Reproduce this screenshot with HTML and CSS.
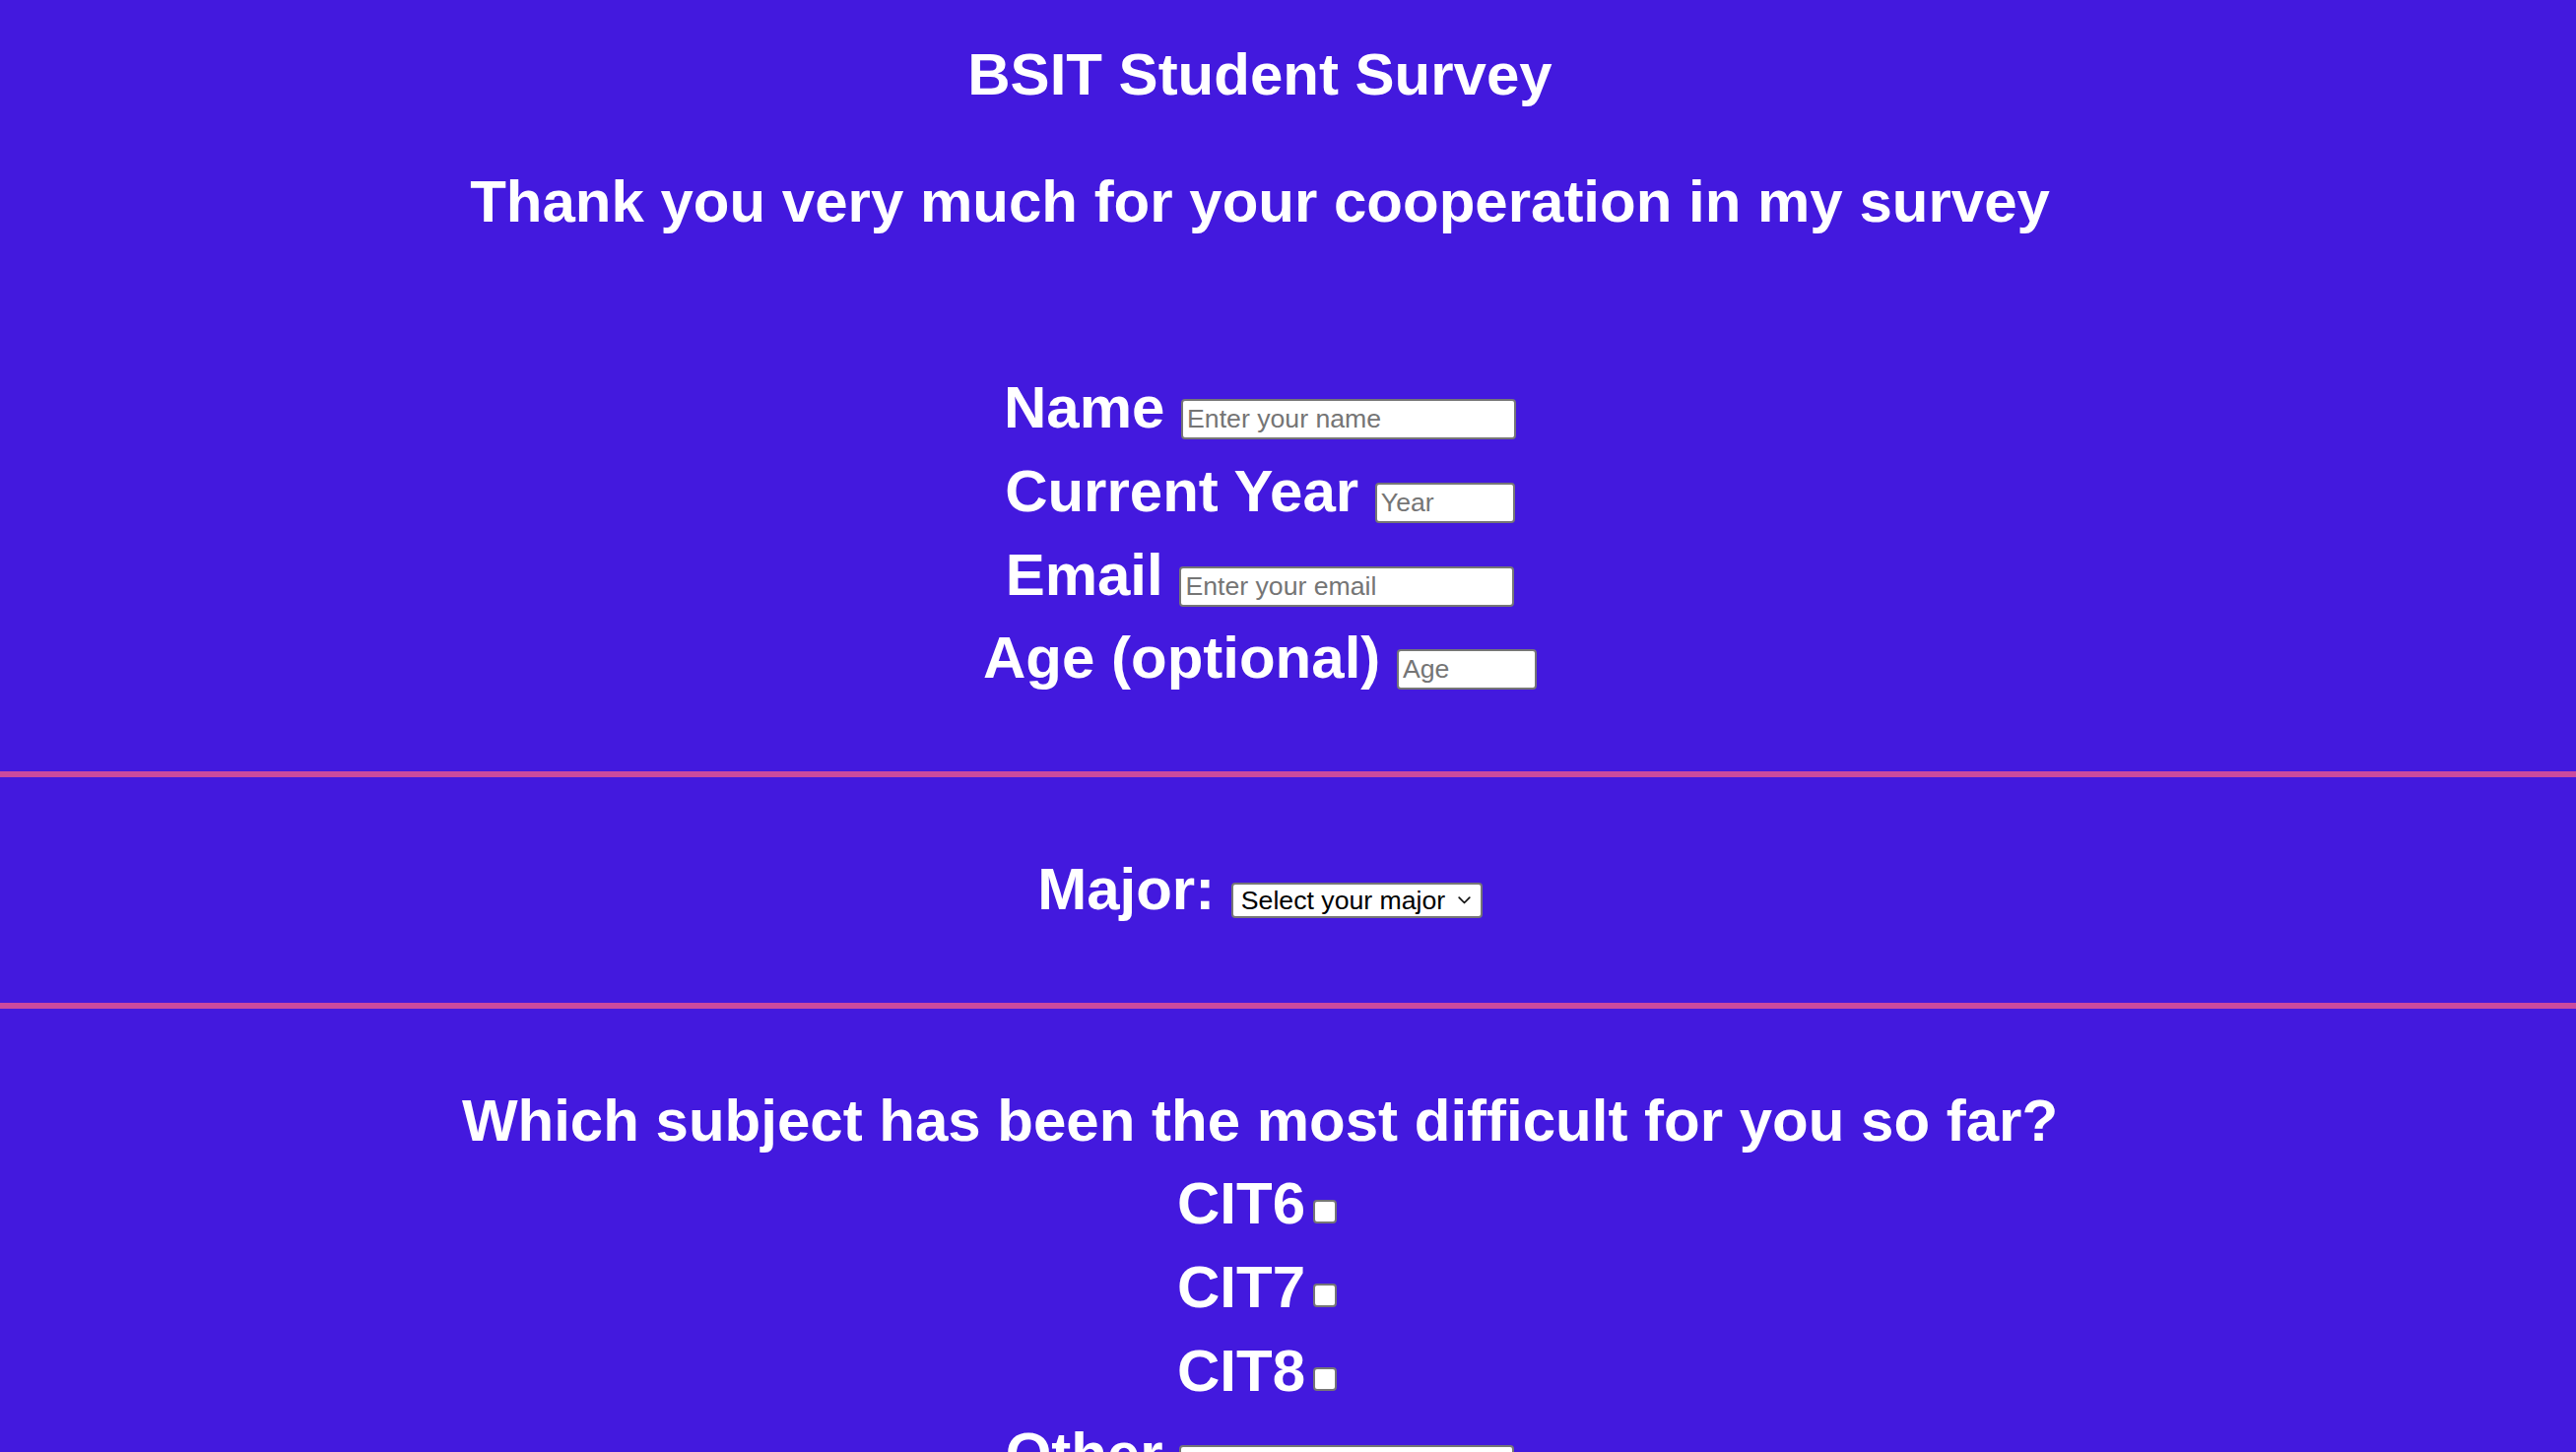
FILE: index.html
```html
<!DOCTYPE html>
<html lang="en">
<head>
<meta charset="utf-8">
<title>BSIT Student Survey</title>
<link rel="stylesheet" href="styles.css">
</head>
<body>
<main class="page">
  <header class="head">
    <h1 class="title">BSIT Student Survey</h1>
    <h2 class="thanks">Thank you very much for your cooperation in my survey</h2>
  </header>

  <section class="info">
    <div class="row"><label class="lbl" for="name">Name</label> <input class="field wide" id="name" type="text" placeholder="Enter your name"></div>
    <div class="row"><label class="lbl" for="year">Current Year</label> <input class="field narrow" id="year" type="text" placeholder="Year"></div>
    <div class="row"><label class="lbl" for="email">Email</label> <input class="field wide" id="email" type="email" placeholder="Enter your email"></div>
    <div class="row"><label class="lbl" for="age">Age (optional)</label> <input class="field narrow" id="age" type="text" placeholder="Age"></div>
  </section>

  <hr class="divider">

  <section class="major">
    <div class="row"><label class="lbl" for="major">Major:</label> <span class="select-wrap"><select class="select" id="major"><option>Select your major</option><option>Web Development</option><option>Networking</option><option>Data Science</option></select><svg class="chev" width="13" height="8" viewBox="0 0 13 8" aria-hidden="true"><path d="M1.2 1.2 L6.5 6.5 L11.8 1.2" fill="none" stroke="#111" stroke-width="1.7" stroke-linecap="round" stroke-linejoin="round"/></svg></span></div>
  </section>

  <hr class="divider">

  <section class="subjects">
    <h3 class="question">Which subject has been the most difficult for you so far?</h3>
    <div class="row"><label class="lbl" for="cit6">CIT6</label><input class="check" id="cit6" type="checkbox"></div>
    <div class="row"><label class="lbl" for="cit7">CIT7</label><input class="check" id="cit7" type="checkbox"></div>
    <div class="row"><label class="lbl" for="cit8">CIT8</label><input class="check" id="cit8" type="checkbox"></div>
    <div class="row"><label class="lbl" for="other">Other</label> <input class="field wide" id="other" type="text"></div>
  </section>
</main>
</body>
</html>
```

FILE: styles.css
```css
html {
  background: #4319de;
}

body {
  margin: 0;
  background: #4319de;
  color: #ffffff;
  font-family: "Liberation Sans", Arial, sans-serif;
  font-size: 60px;
  font-weight: bold;
  text-align: center;
}

.page {
  display: block;
}

.head,
.info,
.major,
.subjects {
  padding-right: 57px;
}

.head {
  padding-top: 34px;
}

.title,
.thanks,
.question {
  margin: 0;
  font-size: 60px;
  font-weight: bold;
  line-height: 84.67px;
}

.thanks {
  margin-top: 44px;
}

.info {
  padding-top: 125px;
  padding-bottom: 71.67px;
}

.row {
  line-height: 84.67px;
  white-space: nowrap;
}

.lbl {
  font-weight: bold;
}

.divider {
  display: block;
  height: 6px;
  margin: 0;
  border: 0;
  background: #cb4a9e;
}

.major {
  padding-top: 72px;
  padding-bottom: 72.4px;
}

.subjects {
  padding-top: 72px;
}

.field {
  box-sizing: border-box;
  height: 41px;
  padding: 0 4px;
  margin: 0;
  border: 2px solid #767676;
  border-radius: 4px;
  background: #ffffff;
  color: #000000;
  font-family: "Liberation Sans", Arial, sans-serif;
  font-size: 26.67px;
  font-weight: normal;
  line-height: normal;
  vertical-align: baseline;
  outline: none;
}

.field::placeholder {
  color: #757575;
  opacity: 1;
}

.wide {
  width: 340px;
}

.narrow {
  width: 142px;
}

.select-wrap {
  position: relative;
  display: inline-block;
  font-size: 26.67px;
  line-height: normal;
  vertical-align: baseline;
}

.select {
  -webkit-appearance: none;
  appearance: none;
  box-sizing: border-box;
  width: 255px;
  height: 36px;
  margin: 0;
  padding: 0 30px 0 8px;
  border: 2px solid #767676;
  border-radius: 4px;
  background: #ffffff;
  color: #000000;
  font-family: "Liberation Sans", Arial, sans-serif;
  font-size: 26.67px;
  font-weight: normal;
  line-height: normal;
  text-align: left;
  vertical-align: baseline;
  outline: none;
}

.chev {
  position: absolute;
  right: 12px;
  top: 14px;
  pointer-events: none;
}

.check {
  -webkit-appearance: none;
  appearance: none;
  box-sizing: border-box;
  display: inline-block;
  width: 24px;
  height: 24px;
  margin: 0 6px 0 8px;
  padding: 0;
  border: 2px solid #767676;
  border-radius: 4px;
  background: #ffffff;
  vertical-align: baseline;
}
```
